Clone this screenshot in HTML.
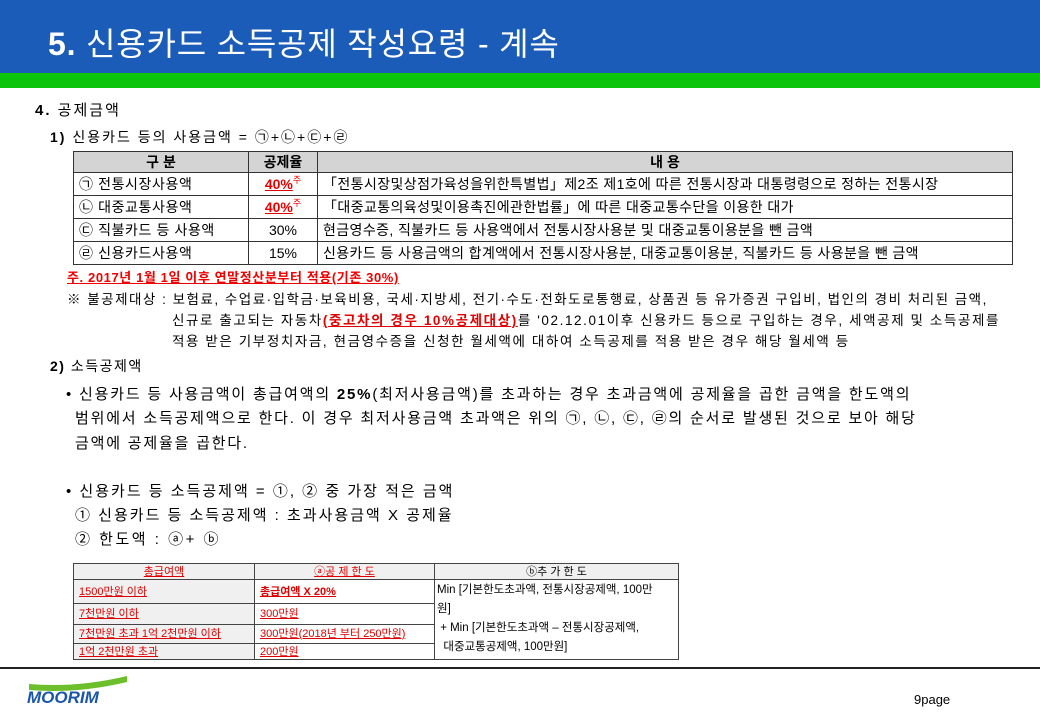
<!DOCTYPE html>
<html><head><meta charset="utf-8"><style>
*{margin:0;padding:0;box-sizing:border-box}
body{width:1040px;height:720px;position:relative;background:#fff;font-family:"Liberation Sans","Noto Sans CJK KR",sans-serif;color:#000;overflow:hidden}
.a{position:absolute;white-space:nowrap}
.hdr{left:0;top:0;width:1040px;height:73px;background:#1a5cb8}
.grn{left:0;top:73px;width:1040px;height:15px;background:#0dc40d}
.t{font-size:15px;letter-spacing:1.8px}
table{position:absolute;border-collapse:collapse;font-size:14px;table-layout:fixed}
td{border:1px solid #333;padding:0 5px;line-height:16px;overflow:hidden;white-space:nowrap}
.m td{height:23px}
.m .hd td{height:21px}
.hd td{background:#d4d4d4;font-weight:bold;text-align:center}
.c{text-align:center}
.r{color:#e00000;text-decoration:underline;font-weight:bold}
.sp{position:relative;top:-6px;color:#e00;font-size:9px;line-height:0}
.b2 td{font-size:11px;border-color:#444;color:#d00;text-decoration:underline;background:#f0f0f0;line-height:14px}
.b2 .w{background:#fff}
</style></head><body>
<div class="a hdr"></div><div class="a grn"></div>
<div class="a" style="left:48px;top:19px;font-size:32px;letter-spacing:0.8px;color:#fff"><b>5.</b> 신용카드 소득공제 작성요령 - 계속</div>
<div class="a" style="left:35px;top:99px;font-size:15px;letter-spacing:2px"><b>4.</b> 공제금액</div>
<div class="a" style="left:50px;top:127px;font-size:14px;letter-spacing:2px"><b>1)</b> 신용카드 등의 사용금액 = ㉠+㉡+㉢+㉣</div>
<table class="m" style="left:73px;top:151px;width:940px">
<colgroup><col style="width:175px"><col style="width:69px"><col></colgroup>
<tr class="hd"><td>구 분</td><td>공제율</td><td>내 용</td></tr>
<tr><td style="letter-spacing:0.6px">㉠ 전통시장사용액</td><td class="c"><span class="r">40%</span><span class="sp">주</span></td><td style="letter-spacing:0.4px">「전통시장및상점가육성을위한특별법」제2조 제1호에 따른 전통시장과 대통령령으로 정하는 전통시장</td></tr>
<tr><td style="letter-spacing:0.6px">㉡ 대중교통사용액</td><td class="c"><span class="r">40%</span><span class="sp">주</span></td><td style="letter-spacing:0.4px">「대중교통의육성및이용촉진에관한법률」에 따른 대중교통수단을 이용한 대가</td></tr>
<tr><td style="letter-spacing:0.6px">㉢ 직불카드 등 사용액</td><td class="c">30%</td><td style="letter-spacing:0.4px">현금영수증, 직불카드 등 사용액에서 전통시장사용분 및 대중교통이용분을 뺀 금액</td></tr>
<tr><td style="letter-spacing:0.6px">㉣ 신용카드사용액</td><td class="c">15%</td><td style="letter-spacing:0.4px">신용카드 등 사용금액의 합계액에서 전통시장사용분, 대중교통이용분, 직불카드 등 사용분을 뺀 금액</td></tr>
</table>
<div class="a" style="left:67px;top:267px;font-size:13px;letter-spacing:0.6px;color:#e00;text-decoration:underline;font-weight:bold">주. 2017년 1월 1일 이후 연말정산분부터 적용(기존 30%)</div>
<div class="a" style="left:67px;top:288px;font-size:13.5px;letter-spacing:1.5px">※ 불공제대상 : 보험료, 수업료·입학금·보육비용, 국세·지방세, 전기·수도·전화도로통행료, 상품권 등 유가증권 구입비, 법인의 경비 처리된 금액,</div>
<div class="a" style="left:172px;top:309px;font-size:13.5px;letter-spacing:1.6px">신규로 출고되는 자동차<span class="r">(중고차의 경우 10%공제대상)</span>를 '02.12.01이후 신용카드 등으로 구입하는 경우, 세액공제 및 소득공제를</div>
<div class="a" style="left:172px;top:330px;font-size:13.5px;letter-spacing:1.6px">적용 받은 기부정치자금, 현금영수증을 신청한 월세액에 대하여 소득공제를 적용 받은 경우 해당 월세액 등</div>
<div class="a" style="left:50px;top:356px;font-size:14px;letter-spacing:1.5px"><b>2)</b> 소득공제액</div>
<div class="a t" style="left:66px;top:383px">• 신용카드 등 사용금액이 총급여액의 <b>25%</b>(최저사용금액)를 초과하는 경우 초과금액에 공제율을 곱한 금액을 한도액의</div>
<div class="a t" style="left:75px;top:407px">범위에서 소득공제액으로 한다. 이 경우 최저사용금액 초과액은 위의 ㉠, ㉡, ㉢, ㉣의 순서로 발생된 것으로 보아 해당</div>
<div class="a t" style="left:75px;top:432px">금액에 공제율을 곱한다.</div>
<div class="a t" style="left:66px;top:480px;letter-spacing:2px">• 신용카드 등 소득공제액 = ①, ② 중 가장 적은 금액</div>
<div class="a t" style="left:75px;top:504px;letter-spacing:2px">① 신용카드 등 소득공제액 : 초과사용금액 X 공제율</div>
<div class="a t" style="left:75px;top:528px;letter-spacing:2.5px">② 한도액 : ⓐ+ ⓑ</div>
<table class="b2" style="left:73px;top:563px;width:606px">
<colgroup><col style="width:181px"><col style="width:180px"><col></colgroup>
<tr class="hd"><td style="height:16px;font-weight:normal;color:#d00">총급여액</td><td style="font-weight:normal;color:#d00">ⓐ공 제 한 도</td><td style="font-weight:normal;color:#000;text-decoration:none">ⓑ추 가 한 도</td></tr>
<tr><td style="height:24px">1500만원 이하</td><td class="w" style="font-weight:bold">총급여액 X 20%</td><td class="w" rowspan="4" style="color:#000;text-decoration:none;font-size:11.5px;line-height:19px;vertical-align:top;padding:1px 2px">Min [기본한도초과액, 전통시장공제액, 100만<br>원]<br>&nbsp;+ Min [기본한도초과액 – 전통시장공제액,<br>&nbsp;&nbsp;대중교통공제액, 100만원]</td></tr>
<tr><td style="height:21px">7천만원 이하</td><td class="w">300만원</td></tr>
<tr><td style="height:19px">7천만원 초과 1억 2천만원 이하</td><td class="w">300만원(2018년 부터 250만원)</td></tr>
<tr><td style="height:16px">1억 2천만원 초과</td><td class="w">200만원</td></tr>
</table>
<div class="a" style="left:0;top:667px;width:1040px;height:2px;background:#222"></div>
<svg class="a" style="left:27px;top:674px" width="105" height="20"><path d="M2 10 Q50 14 100 2 L100 8 Q50 20 2 16Z" fill="#6cbf2a"/></svg>
<div class="a" style="left:27px;top:688px;font-size:17px;font-weight:bold;font-style:italic;color:#1a56a8">MOORIM</div>
<div class="a" style="left:914px;top:692px;font-size:13px">9page</div>
</body></html>
